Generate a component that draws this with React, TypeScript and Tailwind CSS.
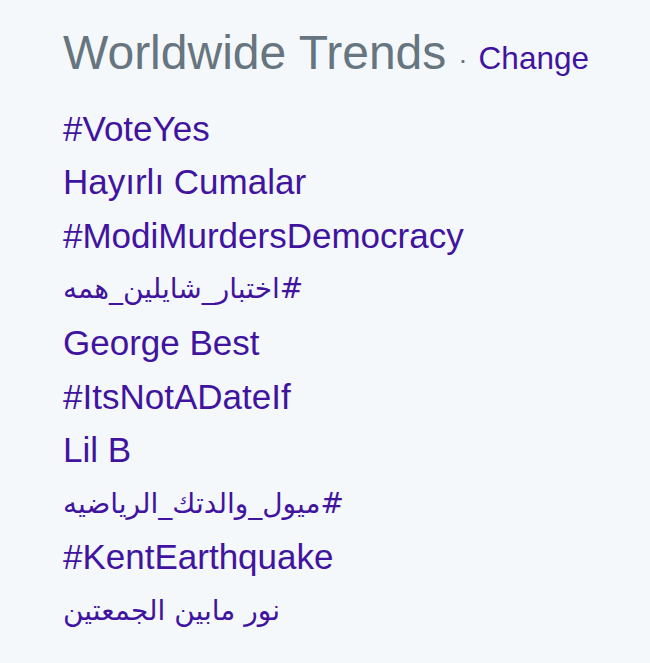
import React from "react";

type Trend = { text: string; rtl?: boolean };

const trends: Trend[] = [
  { text: "#VoteYes" },
  { text: "Hayırlı Cumalar" },
  { text: "#ModiMurdersDemocracy" },
  { text: "#اختبار_شايلين_همه", rtl: true },
  { text: "George Best" },
  { text: "#ItsNotADateIf" },
  { text: "Lil B" },
  { text: "#ميول_والدتك_الرياضيه", rtl: true },
  { text: "#KentEarthquake" },
  { text: "نور مابين الجمعتين", rtl: true },
];

export default function App() {
  return (
    <div className="min-h-[663px] w-[650px] bg-[#f5f8fa] pl-[63px] pt-[24px] font-['Liberation_Sans','DejaVu_Sans',Arial,sans-serif]">
      <div className="flex items-baseline leading-[57.6px]">
        <h3 className="text-[48px] text-[#66757f] font-normal">Worldwide Trends</h3>
        <span className="ml-[12px] mr-[11px] text-[28px] text-[#66757f]">·</span>
        <a className="text-[31.5px] text-[#4114a0]" href="#">
          Change
        </a>
      </div>
      <ul className="mt-[13px] flex flex-col">
        {trends.map((t) => (
          <li key={t.text} className="h-[53.6px] text-[35px] leading-[53.6px] text-[#4114a0]">
            {t.rtl ? (
              <span dir="rtl" className="inline-block text-[28px] leading-[53.6px] align-top font-['DejaVu_Sans',sans-serif]">
                {t.text}
              </span>
            ) : (
              <span>{t.text}</span>
            )}
          </li>
        ))}
      </ul>
    </div>
  );
}
